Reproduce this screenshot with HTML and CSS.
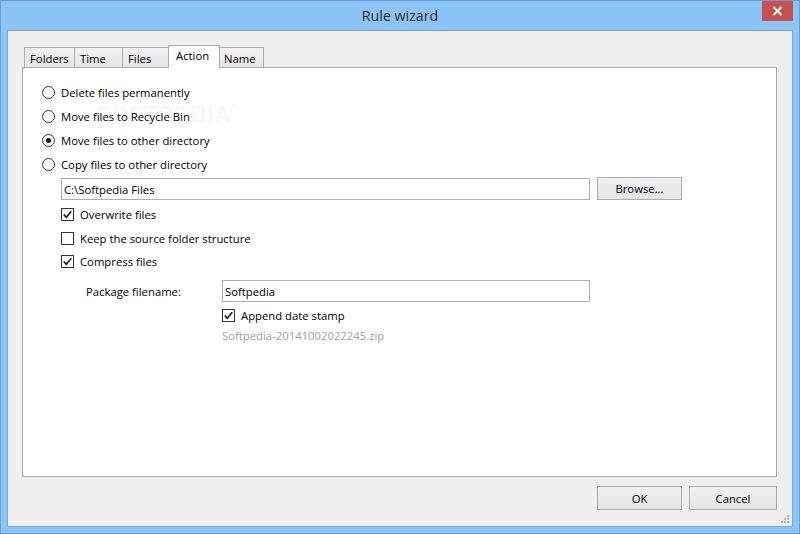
FILE: index.html
```html
<!DOCTYPE html>
<html lang="en">
<head>
    <meta charset="UTF-8">
    <title>Rule wizard</title>
    <link rel="stylesheet" href="styles.css">
</head>
<body>
    <div class="window">
        <div class="titlebar">
            <span class="title">Rule wizard</span>
            <div class="close">
                <svg width="11" height="10" viewBox="0 0 11 10"><path d="M1.5 1 L9.5 9 M9.5 1 L1.5 9" stroke="#fff" stroke-width="2"/></svg>
            </div>
        </div>

        <div class="client">
            <div class="tabs">
                <div class="tab w-folders">Folders</div>
                <div class="tab w-time">Time</div>
                <div class="tab w-files">Files</div>
                <div class="tab active w-action">Action</div>
                <div class="tab w-name">Name</div>
            </div>

            <div class="panel">
                <div class="watermark">SOFTPEDIA<sup>®</sup></div>

                <div class="row"><span class="radio"></span>Delete files permanently</div>
                <div class="row"><span class="radio"></span>Move files to Recycle Bin</div>
                <div class="row"><span class="radio on"></span>Move files to other directory</div>
                <div class="row"><span class="radio"></span>Copy files to other directory</div>

                <div class="row dir-row">
                    <div class="textbox dir-box">C:\Softpedia Files</div>
                    <div class="button">Browse...</div>
                </div>

                <div class="row sub first"><span class="check on"><svg width="11" height="11" viewBox="0 0 11 11"><path d="M1.8 5.6 L4.3 8.2 L9.3 2.2" fill="none" stroke="#222" stroke-width="1.7"/></svg></span>Overwrite files</div>
                <div class="row sub"><span class="check"></span>Keep the source folder structure</div>
                <div class="row sub short"><span class="check on"><svg width="11" height="11" viewBox="0 0 11 11"><path d="M1.8 5.6 L4.3 8.2 L9.3 2.2" fill="none" stroke="#222" stroke-width="1.7"/></svg></span>Compress files</div>

                <div class="package">
                    <div class="pkg-label">Package filename:</div>
                    <div class="textbox pkg-box">Softpedia</div>
                </div>
                <div class="row stamp"><span class="check on"><svg width="11" height="11" viewBox="0 0 11 11"><path d="M1.8 5.6 L4.3 8.2 L9.3 2.2" fill="none" stroke="#222" stroke-width="1.7"/></svg></span>Append date stamp</div>
                <div class="preview">Softpedia-20141002022245.zip</div>
            </div>

            <div class="footer">
                <div class="button ok">OK</div>
                <div class="button cancel">Cancel</div>
                <svg class="grip" width="10" height="10" viewBox="0 0 10 10">
                    <rect x="7" y="1" width="2" height="2" fill="#b5b5b5"/>
                    <rect x="4" y="4" width="2" height="2" fill="#b5b5b5"/>
                    <rect x="7" y="4" width="2" height="2" fill="#b5b5b5"/>
                    <rect x="1" y="7" width="2" height="2" fill="#b5b5b5"/>
                    <rect x="4" y="7" width="2" height="2" fill="#b5b5b5"/>
                    <rect x="7" y="7" width="2" height="2" fill="#b5b5b5"/>
                </svg>
            </div>
        </div>
    </div>
</body>
</html>
```

FILE: styles.css
```css
body {
    margin: 0;
    padding: 0;
    font-family: "Open Sans", "Noto Sans", sans-serif;
    font-size: 11.3px;
    color: #000;
}

.window {
    width: 800px;
    height: 534px;
    box-sizing: border-box;
    background: #8bc4f7;
    border: 1px solid #6b9bd2;
    display: flex;
    flex-direction: column;
}

.titlebar {
    height: 28px;
    position: relative;
    display: flex;
    justify-content: center;
    align-items: center;
    padding-bottom: 1px;
}

.title {
    font-size: 14.2px;
    color: #2a2a2a;
}

.close {
    position: absolute;
    top: 0;
    right: 6px;
    width: 31px;
    height: 20px;
    background: #c75050;
    display: flex;
    justify-content: center;
    align-items: center;
}

.client {
    margin: 0 6px 6px 6px;
    flex: 1;
    background: #f0f0f0;
    border: 1px solid #78a6d8;
    padding: 14px 15px 0 14px;
    display: flex;
    flex-direction: column;
}

.tabs {
    display: flex;
    align-items: flex-end;
    height: 23px;
    padding-left: 2px;
    margin-bottom: -1px;
    position: relative;
    z-index: 1;
}

.tab {
    box-sizing: border-box;
    height: 21px;
    border: 1px solid #acacac;
    background: linear-gradient(#f2f2f2, #e6e6e6);
    margin-left: -1px;
    display: flex;
    align-items: center;
    padding: 1px 0 0 5px;
}

.tab:first-child {
    margin-left: 0;
}

.tab.active {
    height: 23px;
    background: #fff;
    border-bottom: none;
    padding: 0 0 3px 7px;
}

.w-folders { width: 51px; }
.w-time { width: 49px; }
.w-files { width: 47px; }
.w-action { width: 52px; }
.w-name { width: 45px; padding-left: 4px; }

.panel {
    height: 410px;
    box-sizing: border-box;
    background: #fff;
    border: 1px solid #acacac;
    padding: 12px 0 0 19px;
    position: relative;
}

.watermark {
    position: absolute;
    left: 72px;
    top: 34px;
    font-family: "Liberation Sans", sans-serif;
    font-weight: bold;
    font-size: 23px;
    letter-spacing: 0.5px;
    color: #f8f8f8;
}

.watermark sup {
    font-size: 8px;
    vertical-align: top;
}

.row {
    height: 24px;
    display: flex;
    align-items: center;
    position: relative;
}

.radio {
    width: 13px;
    height: 13px;
    box-sizing: border-box;
    border: 1px solid #333;
    border-radius: 50%;
    background: #fff;
    margin-right: 6px;
    display: flex;
    justify-content: center;
    align-items: center;
}

.radio.on::after {
    content: "";
    width: 5px;
    height: 5px;
    border-radius: 50%;
    background: #1a1a1a;
}

.dir-row {
    margin-left: 19px;
    margin-top: 1px;
}

.textbox {
    height: 22px;
    box-sizing: border-box;
    border: 1px solid #abadb3;
    background: #fff;
    padding-left: 2px;
    display: flex;
    align-items: center;
}

.dir-box {
    width: 529px;
}

.button {
    height: 23px;
    box-sizing: border-box;
    border: 1px solid #acacac;
    background: linear-gradient(#f0f0f0, #e5e5e5);
    display: flex;
    justify-content: center;
    align-items: center;
}

.dir-row .button {
    width: 85px;
    margin-left: 7px;
    margin-top: -1px;
}

.sub {
    margin-left: 19px;
}

.sub.first {
    margin-top: 1px;
}

.sub.short {
    height: 23px;
}

.check {
    width: 13px;
    height: 13px;
    box-sizing: border-box;
    border: 1px solid #333;
    background: #fff;
    margin-right: 6px;
    display: flex;
    justify-content: center;
    align-items: center;
}

.package {
    display: flex;
    align-items: center;
    height: 24px;
    margin-top: 6px;
    margin-left: 44px;
}

.pkg-label {
    width: 136px;
}

.pkg-box {
    width: 368px;
}

.stamp {
    margin-left: 180px;
}

.preview {
    margin-left: 180px;
    height: 16px;
    display: flex;
    align-items: center;
    color: #a0a0a0;
}

.footer {
    display: flex;
    justify-content: flex-end;
    padding-top: 9px;
    gap: 7px;
    position: relative;
    flex: 1;
}

.ok {
    width: 85px;
    height: 24px;
}

.cancel {
    width: 88px;
    height: 24px;
}

.grip {
    position: absolute;
    right: -13px;
    bottom: 2px;
}
```
